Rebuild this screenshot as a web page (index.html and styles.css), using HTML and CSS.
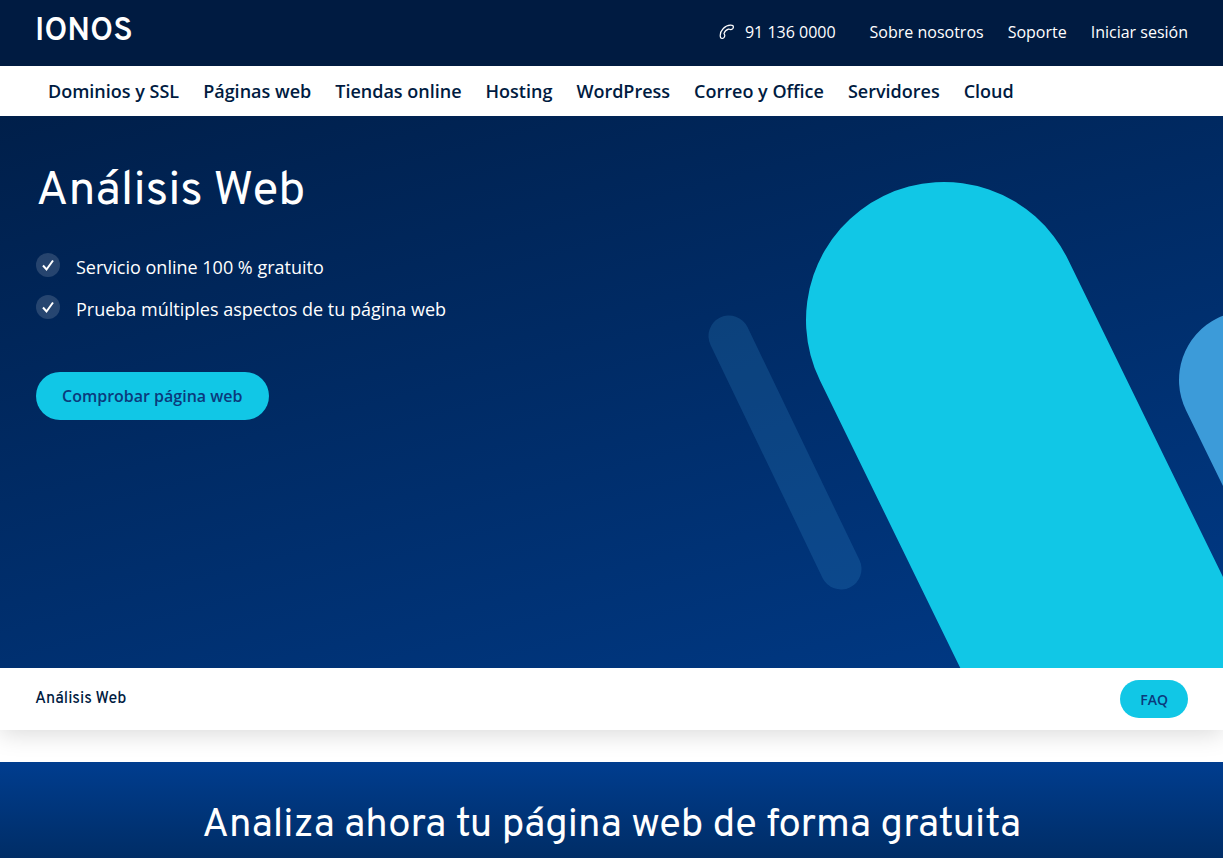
FILE: index.html
```html
<!DOCTYPE html>
<html lang="es">
<head>
    <meta charset="UTF-8">
    <meta name="viewport" content="width=device-width, initial-scale=1.0">
    <title>Análisis Web</title>
    <link rel="stylesheet" href="styles.css">
</head>
<body>

<!-- Header -->
<header class="header">
    <a href="#" class="logo">IONOS</a>
    <div class="header-links">
        <a href="tel:911360000" class="phone">
            <svg class="phone-icon" viewBox="0 0 16 16" aria-hidden="true">
                <path d="M1.200 11.500C1.200 6.500 6 1.300 11.500 1.200c1.500 0 2.900.5 2.900 1.800 0 1.400-1.300 2.700-2.800 2.700-1 0-1.300-.9-2.200-.6C7.500 5.700 5.600 7.600 5.100 9.300c-.3.900.7 1.200.7 2.200 0 1.500-1.300 3-2.700 3-1.400 0-1.900-1.500-1.900-3z"/>
            </svg>
            <span>91 136 0000</span>
        </a>
        <a href="#">Sobre nosotros</a>
        <a href="#">Soporte</a>
        <a href="#">Iniciar sesión</a>
    </div>
</header>

<!-- Main navigation -->
<nav class="main-nav">
    <a href="#">Dominios y SSL</a>
    <a href="#">Páginas web</a>
    <a href="#">Tiendas online</a>
    <a href="#">Hosting</a>
    <a href="#">WordPress</a>
    <a href="#">Correo y Office</a>
    <a href="#">Servidores</a>
    <a href="#">Cloud</a>
</nav>

<!-- Hero -->
<section class="hero">
    <svg class="hero-shapes" viewBox="0 0 533 552" aria-hidden="true">
        <line class="bar-dark" x1="39" y1="220" x2="151" y2="453"/>
        <line class="bar-cyan" x1="254" y1="204" x2="498" y2="704"/>
        <line class="bar-blue" x1="558" y1="264" x2="680" y2="514"/>
    </svg>
    <div class="hero-content">
        <h1>Análisis Web</h1>
        <ul class="benefits">
            <li>
                <svg class="check" viewBox="0 0 24 24" aria-hidden="true">
                    <circle cx="12" cy="12" r="12"/>
                    <path d="M7 12.500l3.500 4 6.500-9"/>
                </svg>
                <span>Servicio online 100 % gratuito</span>
            </li>
            <li>
                <svg class="check" viewBox="0 0 24 24" aria-hidden="true">
                    <circle cx="12" cy="12" r="12"/>
                    <path d="M7 12.500l3.500 4 6.500-9"/>
                </svg>
                <span>Prueba múltiples aspectos de tu página web</span>
            </li>
        </ul>
        <button type="button" class="btn">Comprobar página web</button>
    </div>
</section>

<!-- Page bar -->
<div class="page-bar">
    <span class="page-name">Análisis Web</span>
    <button type="button" class="btn btn-small">FAQ</button>
</div>

<!-- Analysis -->
<section class="analyze">
    <h2>Analiza ahora tu página web de forma gratuita</h2>
</section>

</body>
</html>
```

FILE: styles.css
```css
/* Global styles */
* {
    box-sizing: border-box;
}

body {
    margin: 0;
    font-family: "Open Sans", sans-serif;
    color: #001b41;
    background-color: #fff;
}

a {
    color: inherit;
    text-decoration: none;
}

h1, h2 {
    margin: 0;
    font-family: Overpass, Roboto, sans-serif;
    font-weight: 400;
    color: #fff;
}

/* Header */
.header {
    display: flex;
    justify-content: space-between;
    height: 66px;
    padding: 0 35px;
    background-color: #001b41;
    color: #fff;
}

.logo {
    font-family: Overpass, Roboto, sans-serif;
    font-size: 32px;
    font-weight: 600;
    line-height: 64px;
}

.header-links {
    display: flex;
    align-items: center;
    gap: 24px;
    height: 64px;
    font-size: 16px;
}

.phone {
    display: flex;
    align-items: center;
    gap: 10px;
    margin-right: 10px;
}

.phone-icon {
    width: 16px;
    height: 16px;
    fill: none;
    stroke: #fff;
    stroke-width: 1.2;
    stroke-linejoin: round;
}

/* Main navigation */
.main-nav {
    display: flex;
    align-items: center;
    gap: 24px;
    height: 50px;
    padding: 0 48px;
    font-size: 18px;
    font-weight: 600;
}

/* Hero */
.hero {
    position: relative;
    min-height: 552px;
    padding: 44px 36px;
    overflow: hidden;
    background: linear-gradient(165deg, #001f4a 0%, #003a87 100%);
    color: #fff;
}

.hero-shapes {
    position: absolute;
    top: 0;
    right: 0;
    width: 533px;
    height: 552px;
    stroke-linecap: round;
}

.bar-dark {
    stroke: #3c9bd9;
    stroke-opacity: 0.2;
    stroke-width: 41;
}

.bar-cyan {
    stroke: #11c7e6;
    stroke-width: 276;
}

.bar-blue {
    stroke: #3c9bd9;
    stroke-width: 138;
}

.hero-content {
    position: relative;
}

h1 {
    font-size: 48px;
    line-height: 64px;
}

.benefits {
    display: flex;
    flex-direction: column;
    gap: 12px;
    margin: 28px 0 48px;
    padding: 0;
    list-style: none;
    font-size: 18px;
    line-height: 30px;
}

.benefits li {
    display: flex;
    gap: 16px;
}

.check {
    width: 24px;
    height: 24px;
    margin-top: 1px;
}

.check circle {
    fill: #fff;
    fill-opacity: 0.15;
}

.check path {
    fill: none;
    stroke: #fff;
    stroke-width: 2;
}

.btn {
    height: 48px;
    padding: 0 26px;
    border: none;
    border-radius: 24px;
    background-color: #11c7e6;
    color: #0b3a7c;
    font-family: inherit;
    font-size: 16px;
    font-weight: 600;
    cursor: pointer;
}

.btn-small {
    height: 38px;
    padding: 0 20px;
    font-size: 14px;
}

/* Page bar */
.page-bar {
    display: flex;
    align-items: center;
    justify-content: space-between;
    height: 62px;
    padding: 0 35px;
    box-shadow: 0 4px 24px rgba(0, 0, 0, 0.15);
}

.page-name {
    font-family: Overpass, Roboto, sans-serif;
    font-size: 16px;
    font-weight: 500;
}

/* Analysis */
.analyze {
    position: relative;
    margin-top: 32px;
    padding: 40px 36px 8px;
    background: linear-gradient(#003d8f, #002d66);
    text-align: center;
}

h2 {
    font-size: 40px;
    line-height: 48px;
}
```
